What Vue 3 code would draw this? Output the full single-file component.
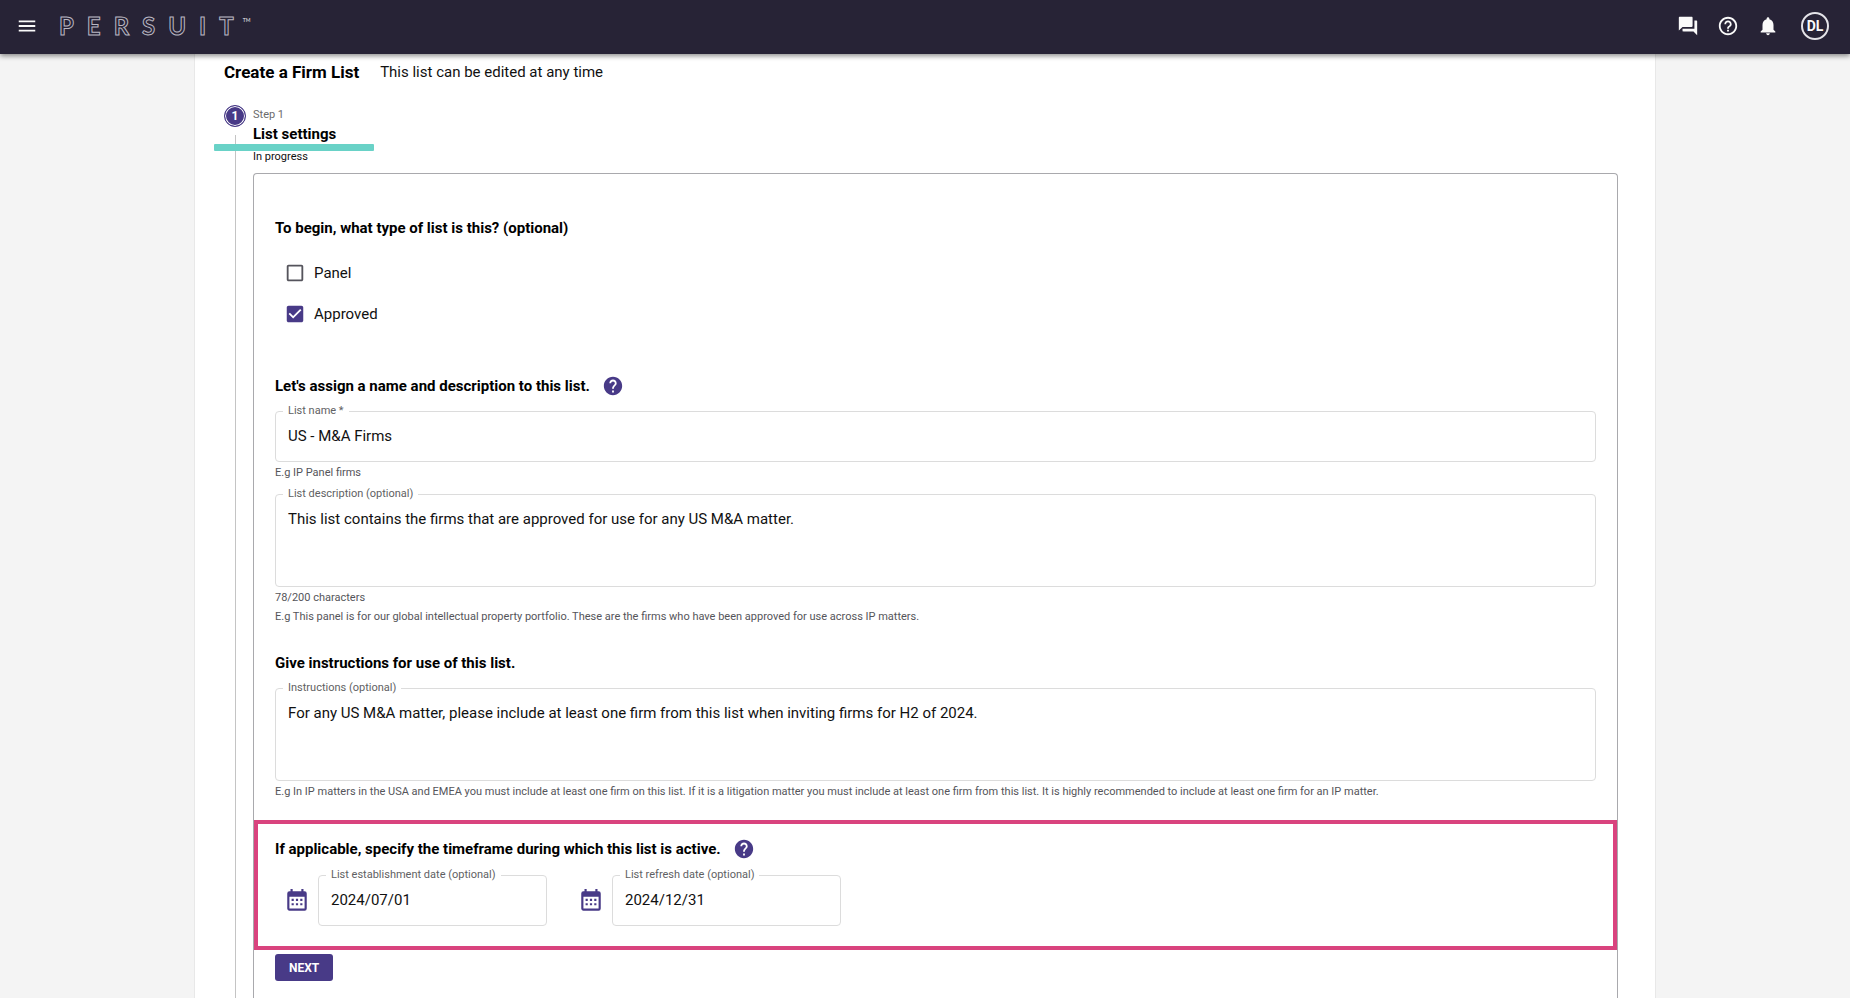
<script setup>
import { ref, computed } from 'vue'

const brand = ['P', 'E', 'R', 'S', 'U', 'I', 'T']
const types = ref([
  { id: 'panel', label: 'Panel', checked: false },
  { id: 'approved', label: 'Approved', checked: true },
])
const name = ref('US - M&A Firms')
const description = ref('This list contains the firms that are approved for use for any US M&A matter.')
const instructions = ref(
  'For any US M&A matter, please include at least one firm from this list when inviting firms for H2 of 2024.'
)
const dates = ref([
  { id: 'established', label: 'List establishment date (optional)', value: '2024/07/01' },
  { id: 'refresh', label: 'List refresh date (optional)', value: '2024/12/31' },
])
const used = computed(() => description.value.length + 1)

const helpPath =
  'M12 2C6.48 2 2 6.48 2 12s4.48 10 10 10 10-4.48 10-10S17.52 2 12 2zm1 17h-2v-2h2v2zm2.07-7.75l-.9.92C13.45 12.9 13 13.5 13 15h-2v-.5c0-1.1.45-2.1 1.17-2.83l1.24-1.26c.37-.36.59-.86.59-1.41 0-1.1-.9-2-2-2s-2 .9-2 2H8c0-2.21 1.79-4 4-4s4 1.79 4 4c0 .88-.36 1.68-.93 2.25z'
const calendarPath =
  'M9,10V12H7V10H9M13,10V12H11V10H13M17,10V12H15V10H17M19,3A2,2 0 0,1 21,5V19A2,2 0 0,1 19,21H5C3.89,21 3,20.1 3,19V5A2,2 0 0,1 5,3H6V1H8V3H16V1H18V3H19M19,19V8H5V19H19M9,14V16H7V14H9M13,14V16H11V14H13M17,14V16H15V14H17Z'
</script>

<template>
  <div class="app">
    <header class="topbar">
      <button class="icon-btn" aria-label="Menu">
        <svg viewBox="0 0 24 24"><path d="M3 18h18v-2H3v2zm0-5h18v-2H3v2zm0-7v2h18V6H3z" /></svg>
      </button>
      <a class="brand" href="#">
        <span v-for="letter in brand" :key="letter" class="letter">{{ letter }}</span>
        <span class="tm">TM</span>
      </a>
      <nav class="tools">
        <button class="icon-btn" aria-label="Messages">
          <svg viewBox="0 0 24 24"><path d="M21 6h-2v9H6v2c0 .55.45 1 1 1h11l4 4V7c0-.55-.45-1-1-1zm-4 6V3c0-.55-.45-1-1-1H3c-.55 0-1 .45-1 1v14l4-4h10c.55 0 1-.45 1-1z" /></svg>
        </button>
        <button class="icon-btn" aria-label="Help">
          <svg viewBox="0 0 24 24"><path d="M11 18h2v-2h-2v2zm1-16C6.48 2 2 6.48 2 12s4.48 10 10 10 10-4.48 10-10S17.52 2 12 2zm0 18c-4.41 0-8-3.59-8-8s3.59-8 8-8 8 3.59 8 8-3.59 8-8 8zm0-14c-2.21 0-4 1.79-4 4h2c0-1.1.9-2 2-2s2 .9 2 2c0 2-3 1.75-3 5h2c0-2.25 3-2.5 3-5 0-2.21-1.79-4-4-4z" /></svg>
        </button>
        <button class="icon-btn" aria-label="Notifications">
          <svg viewBox="0 0 24 24"><path d="M12 22c1.1 0 2-.9 2-2h-4c0 1.1.89 2 2 2zm6-6v-5c0-3.07-1.64-5.64-4.5-6.32V4c0-.83-.67-1.5-1.5-1.5s-1.5.67-1.5 1.5v.68C7.63 5.36 6 7.92 6 11v5l-2 2v1h16v-1l-2-2z" /></svg>
        </button>
        <button class="avatar">DL</button>
      </nav>
    </header>

    <main class="page">
      <div class="title-row">
        <h1>Create a Firm List</h1>
        <p>This list can be edited at any time</p>
      </div>

      <section class="step">
        <div class="rail">
          <span class="dot">1</span>
          <span class="line"></span>
        </div>
        <div class="step-body">
          <div class="step-head">
            <p class="step-no">Step 1</p>
            <h2>List settings</h2>
            <p class="status">In progress</p>
            <span class="marker"></span>
          </div>

          <form class="panel" @submit.prevent>
            <h3 id="type-heading">To begin, what type of list is this? (optional)</h3>
            <div class="checks" role="group" aria-labelledby="type-heading">
              <label v-for="t in types" :key="t.id" class="check">
                <input v-model="t.checked" type="checkbox" />
                <svg class="box" viewBox="0 0 24 24">
                  <path v-if="t.checked" class="on" d="M19 3H5c-1.11 0-2 .9-2 2v14c0 1.1.89 2 2 2h14c1.11 0 2-.9 2-2V5c0-1.1-.89-2-2-2zm-9 14l-5-5 1.41-1.41L10 14.17l7.59-7.59L19 8l-9 9z" />
                  <path v-else d="M19 5v14H5V5h14m0-2H5c-1.1 0-2 .9-2 2v14c0 1.1.9 2 2 2h14c1.1 0 2-.9 2-2V5c0-1.100-.9-2-2-2z" />
                </svg>
                <span>{{ t.label }}</span>
              </label>
            </div>

            <h3>
              Let's assign a name and description to this list.
              <svg class="help" viewBox="0 0 24 24"><path :d="helpPath" /></svg>
            </h3>
            <fieldset class="field">
              <legend><label for="list-name">List name *</label></legend>
              <input id="list-name" v-model="name" type="text" />
            </fieldset>
            <p class="hint">E.g IP Panel firms</p>
            <fieldset class="field">
              <legend><label for="list-desc">List description (optional)</label></legend>
              <textarea id="list-desc" v-model="description"></textarea>
            </fieldset>
            <p class="hint">{{ used }}/200 characters</p>
            <p class="hint">
              E.g This panel is for our global intellectual property portfolio. These are the firms who have been
              approved for use across IP matters.
            </p>

            <h3 class="third">Give instructions for use of this list.</h3>
            <fieldset class="field">
              <legend><label for="list-inst">Instructions (optional)</label></legend>
              <textarea id="list-inst" v-model="instructions"></textarea>
            </fieldset>
            <p class="hint">
              E.g In IP matters in the USA and EMEA you must include at least one firm on this list. If it is a
              litigation matter you must include at least one firm from this list. It is highly recommended to include
              at least one firm for an IP matter.
            </p>

            <div class="highlight">
              <h3>
                If applicable, specify the timeframe during which this list is active.
                <svg class="help" viewBox="0 0 24 24"><path :d="helpPath" /></svg>
              </h3>
              <div class="dates">
                <div v-for="d in dates" :key="d.id" class="date">
                  <svg class="calendar" viewBox="0 0 24 24"><path :d="calendarPath" /></svg>
                  <fieldset class="field">
                    <legend><label :for="d.id">{{ d.label }}</label></legend>
                    <input :id="d.id" v-model="d.value" type="text" />
                  </fieldset>
                </div>
              </div>
            </div>

            <button class="next" type="submit">NEXT</button>
          </form>
        </div>
      </section>
    </main>
  </div>
</template>

<style>
body {
  background: #f4f4f4;
}
</style>

<style scoped>
.app {
  display: flex;
  flex-direction: column;
  min-height: 100vh;
  font-family: Roboto, "Liberation Sans", sans-serif;
  font-size: 15px;
  line-height: 20px;
  color: #111;
}
.app * {
  box-sizing: border-box;
}
h1,
h2,
h3,
p {
  margin: 0;
}
h1,
h2,
h3 {
  color: #000;
}
button,
input,
textarea {
  font: inherit;
  color: inherit;
}
svg {
  display: block;
  fill: currentColor;
}

.topbar {
  position: relative;
  display: flex;
  align-items: center;
  height: 54px;
  padding: 0 21px 2px 16px;
  background: #272336;
  color: #fafafa;
  box-shadow: 0 2px 5px rgba(0, 0, 0, 0.45);
}
.icon-btn {
  padding: 0;
  border: 0;
  background: none;
}
.icon-btn svg {
  width: 22px;
  height: 22px;
}
.brand {
  display: flex;
  align-items: center;
  gap: 13px;
  margin-left: 21px;
  color: #c9c8d0;
  font-family: Lato, Roboto, sans-serif;
  font-size: 24px;
  font-weight: 700;
  text-decoration: none;
}
.letter {
  color: #272336;
  -webkit-text-stroke: 1px #b9b7c2;
}
.tm {
  align-self: flex-start;
  margin-left: -4px;
  font-size: 5px;
  line-height: 8px;
}
.tools {
  display: flex;
  align-items: center;
  gap: 18px;
  margin-left: auto;
}
.avatar {
  width: 28px;
  height: 28px;
  margin-left: 4px;
  padding: 0;
  border: 2px solid #e4e3e8;
  border-radius: 50%;
  background: none;
  font-size: 14px;
  font-weight: 700;
}

.page {
  flex: 1;
  display: flex;
  flex-direction: column;
  width: calc(100% - 48px);
  max-width: 1462px;
  margin: 0 auto;
  padding: 8px 37px 0 29px;
  border: solid #e8e8e8;
  border-width: 0 1px;
  background: #fff;
}
.title-row {
  display: flex;
  gap: 21px;
}
h1 {
  font-size: 17px;
  line-height: 20px;
}
.step {
  flex: 1;
  display: flex;
  gap: 7px;
  margin-top: 23px;
}
.rail {
  display: flex;
  flex-direction: column;
  align-items: center;
  gap: 8px;
}
.dot {
  width: 22px;
  height: 22px;
  border: 1px solid #483a87;
  border-radius: 50%;
  background: #483a87;
  box-shadow: inset 0 0 0 1px #fff;
  color: #fff;
  font-size: 12px;
  font-weight: 700;
  text-align: center;
}
.line {
  flex: 1;
  width: 1px;
  background: #c4c4c4;
}
.step-body {
  flex: 1;
  display: flex;
  flex-direction: column;
  min-width: 0;
  padding-top: 2px;
}
.step-head {
  position: relative;
  padding-bottom: 8px;
}
.step-no {
  font-size: 11px;
  line-height: 16px;
  color: #6b6b6b;
}
h2 {
  font-size: 15px;
  line-height: 22px;
}
.status {
  margin-top: 4px;
  font-size: 11px;
  line-height: 16px;
}
.marker {
  position: absolute;
  top: 37px;
  left: -39px;
  width: 160px;
  height: 7px;
  border-radius: 1px;
  background: #69d2c7;
}

.panel {
  flex: 1;
  padding: 42px 21px 16px;
  border: 1px solid #a9a9ad;
  border-bottom: 0;
  border-radius: 4px 4px 0 0;
}
h3 {
  display: flex;
  align-items: center;
  gap: 12px;
  font-size: 15px;
  line-height: 24px;
}
.help {
  width: 22px;
  height: 22px;
  color: #483a87;
}
.checks {
  margin: 12px 0 40px;
}
.check {
  position: relative;
  display: flex;
  align-items: center;
  gap: 8px;
  width: max-content;
  height: 41px;
  padding-left: 9px;
}
.check input {
  position: absolute;
  width: 22px;
  height: 22px;
  margin: 0;
  opacity: 0;
}
.box {
  width: 22px;
  height: 22px;
  color: #55545c;
}
.on {
  fill: #483a87;
}
.third {
  margin-top: 26px;
}
.field {
  min-width: 0;
  margin: 6px 0 0;
  padding: 0 12px 0 7px;
  border: 1px solid #dcdcdc;
  border-radius: 4px;
}
legend {
  padding: 0 5px;
  font-size: 11px;
  line-height: 14px;
  color: #5f5f63;
}
legend label {
  display: block;
}
.field input,
.field textarea {
  display: block;
  width: 100%;
  padding: 8px 0 15px 5px;
  border: 0;
  outline: 0;
  background: none;
  resize: none;
}
.field textarea {
  height: 85px;
}
.hint {
  margin-top: 2px;
  font-size: 11px;
  line-height: 17px;
  color: #55555a;
}
.highlight {
  margin: 20px -21px 0;
  padding: 13px 17px 20px;
  border: 4px solid #d9437e;
}
.dates {
  display: flex;
  gap: 31px;
  padding: 1px 0 0 9px;
}
.date {
  display: flex;
  align-items: center;
  gap: 8px;
}
.date .field {
  width: 229px;
}
.calendar {
  width: 26px;
  height: 26px;
  margin-top: 14px;
  color: #483a87;
}
.next {
  display: block;
  height: 27px;
  margin-top: 4px;
  padding: 0 14px;
  border: 0;
  border-radius: 3px;
  background: #483a87;
  color: #fff;
  font-size: 12px;
  font-weight: 700;
}
</style>
